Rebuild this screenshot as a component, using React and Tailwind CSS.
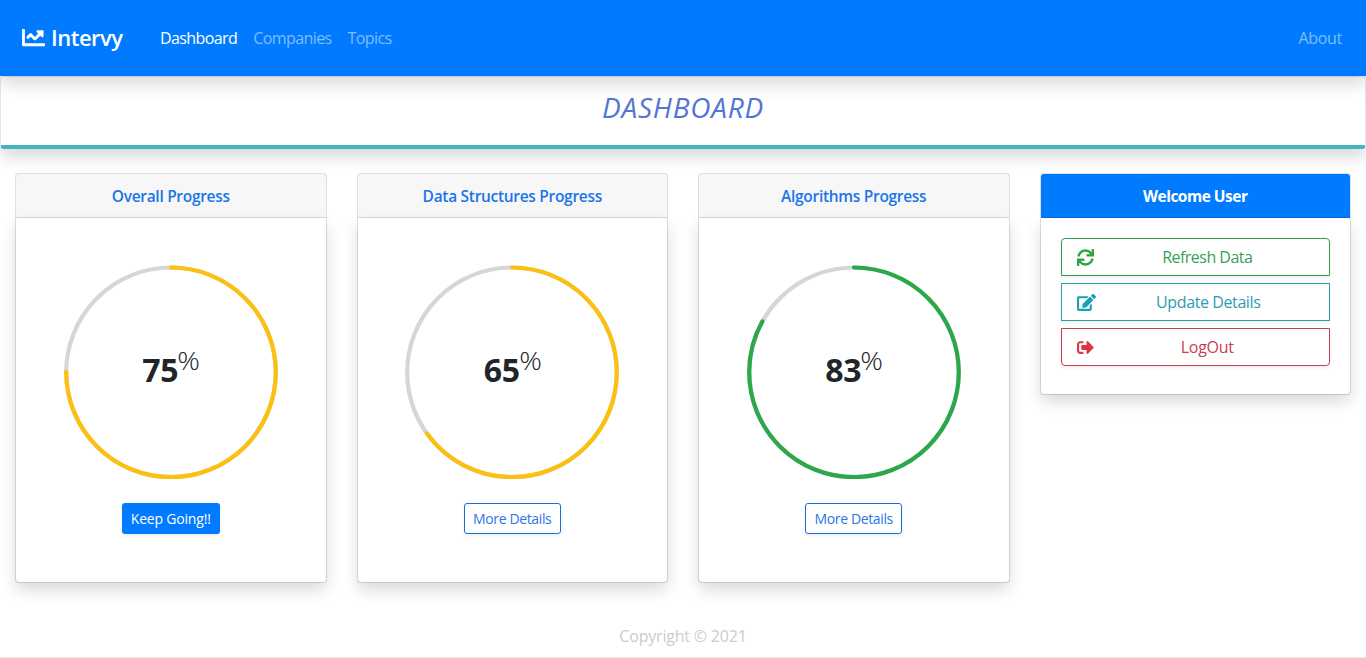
import React from "react";
import { FaChartLine, FaSync, FaEdit, FaSignOutAlt } from "react-icons/fa";

const cards = [
  { title: "Overall Progress", value: 75, color: "#fcc011", action: "Keep Going!!", primary: true },
  { title: "Data Structures Progress", value: 65, color: "#fcc011", action: "More Details" },
  { title: "Algorithms Progress", value: 83, color: "#2ba84a", action: "More Details" },
];

function Ring({ value, color }) {
  const r = 104.8;
  const c = 2 * Math.PI * r;
  return (
    <div className="grid h-[214px] w-[214px] place-items-center">
      <svg className="col-start-1 row-start-1" width="214" height="214" viewBox="0 0 214 214" fill="none" strokeWidth="4.2">
        <circle cx="107" cy="107.3" r={r} stroke="#d6d6d6" />
        <circle cx="107" cy="107.3" r={r} stroke={color} strokeLinecap="round" strokeDasharray={`${(c * value) / 100} ${c}`} transform="rotate(-90 107 107.3)" />
      </svg>
      <div className="col-start-1 row-start-1 -mt-[4px] flex items-start text-[#212529]">
        <span className="text-[32px] leading-[38px] font-bold tracking-[-0.2px]">{value}</span>
        <span className="-mt-[7px] text-[26px] leading-[32px] font-light">
          <span className="inline-block scale-x-108">%</span>
        </span>
      </div>
    </div>
  );
}

function ProgressCard({ card }) {
  return (
    <section className="flex h-[410px] flex-col rounded border border-black/[0.125] bg-white">
      <h2 className="flex h-[44px] shrink-0 items-center justify-center border-b border-black/[0.125] bg-black/[0.03] pt-[2px] text-[15.5px] font-semibold text-[#1a75ea]">
        <span className="tracking-[-0.3px]">{card.title}</span>
      </h2>
      <div className="flex flex-1 flex-col items-center rounded-b pt-[47px] shadow-[0_8px_16px_rgba(0,0,0,0.15)]">
        <Ring value={card.value} color={card.color} />
        <button
          className={
            card.primary
              ? "mt-[24px] h-[31px] w-[98px] rounded-[3px] bg-[#007bff] text-[14px] tracking-[-0.2px] text-white shadow-[0_2px_4px_rgba(0,0,0,0.075)]"
              : "mt-[24px] h-[31px] w-[97px] rounded-[3px] border border-[#1a6fd6] text-[14px] tracking-[-0.37px] text-[#2b76e5] shadow-[0_2px_4px_rgba(0,0,0,0.075)]"
          }
        >
          {card.action}
        </button>
      </div>
    </section>
  );
}

export default function App() {
  return (
    <div className="flex h-[658px] flex-col overflow-hidden bg-white font-['Open_Sans','Noto_Sans',sans-serif] text-[16px]">
      <nav className="relative z-10 flex h-[76px] shrink-0 items-center bg-[#007bff] px-6 shadow-[0_8px_16px_rgba(0,0,0,0.15)]">
        <a className="flex w-[136px] shrink-0 items-center pb-px text-[22px] font-semibold text-white">
          <FaChartLine className="mr-[6px] -ml-[2px] h-[23px] w-[23px]" />
          <span className="tracking-[-0.5px]">Intervy</span>
        </a>
        <div className="flex flex-1 gap-4 text-[#7fbdff]">
          <a className="tracking-[-0.6px] text-white">Dashboard</a>
          <a className="tracking-[-0.58px]">Companies</a>
          <a className="tracking-[-0.6px]">Topics</a>
        </div>
        <a className="tracking-[-0.32px] text-[#7fbdff]">About</a>
      </nav>
      <header className="flex h-[73px] shrink-0 justify-center rounded border border-b-4 border-[#e3e6f0] border-b-[#45b3c3] pt-[9px] shadow-[0_8px_16px_rgba(0,0,0,0.15)]">
        <h1 className="text-[28px] leading-[42px] font-normal tracking-[0.8px] text-[#5475d3] italic">DASHBOARD</h1>
      </header>
      <main className="mt-[24px] grid h-[410px] shrink-0 grid-cols-4 items-start gap-x-[30px] px-[15px]">
        {cards.map((card) => (
          <ProgressCard key={card.title} card={card} />
        ))}
        <section className="flex h-[222px] flex-col rounded border border-black/[0.125] bg-white">
          <h2 className="flex h-[44px] shrink-0 items-center justify-center rounded-t-[3px] border-b border-black/[0.125] bg-[#007bff] pt-[2px] text-[15.5px] font-bold text-white">
            <span className="tracking-[-0.5px]">Welcome User</span>
          </h2>
          <div className="flex flex-1 flex-col gap-[7px] rounded-b px-5 pt-5 shadow-[0_8px_16px_rgba(0,0,0,0.15)]">
            <button className="flex h-[38px] items-center rounded-t border border-[#349c50] px-[15px] text-[#3a9f55] shadow-[0_2px_4px_rgba(0,0,0,0.075)]">
              <FaSync className="h-[17px] w-[17px] text-[#28a745]" />
              <span className="flex-1 pl-[7px] tracking-[-0.52px]">Refresh Data</span>
            </button>
            <button className="flex h-[38px] items-center border border-[#2b9cab] px-[15px] text-[#2e9cb2] shadow-[0_2px_4px_rgba(0,0,0,0.075)]">
              <FaEdit className="h-[17px] w-[19px] text-[#17a2b8]" />
              <span className="flex-1 pl-[7px] tracking-[-0.4px]">Update Details</span>
            </button>
            <button className="flex h-[38px] items-center rounded-b border border-[#c33f50] px-[15px] text-[#c6404f] shadow-[0_2px_4px_rgba(0,0,0,0.075)]">
              <FaSignOutAlt className="h-[17px] w-[17px] text-[#dc3545]" />
              <span className="flex-1 pl-[7px] tracking-[-0.25px]">LogOut</span>
            </button>
          </div>
        </section>
      </main>
      <footer className="flex flex-1 items-end justify-center border-b border-[#e7e7e7] pb-[9px] text-[#cccccc]">
        <span className="tracking-[-0.2px]">Copyright © 2021</span>
      </footer>
    </div>
  );
}
